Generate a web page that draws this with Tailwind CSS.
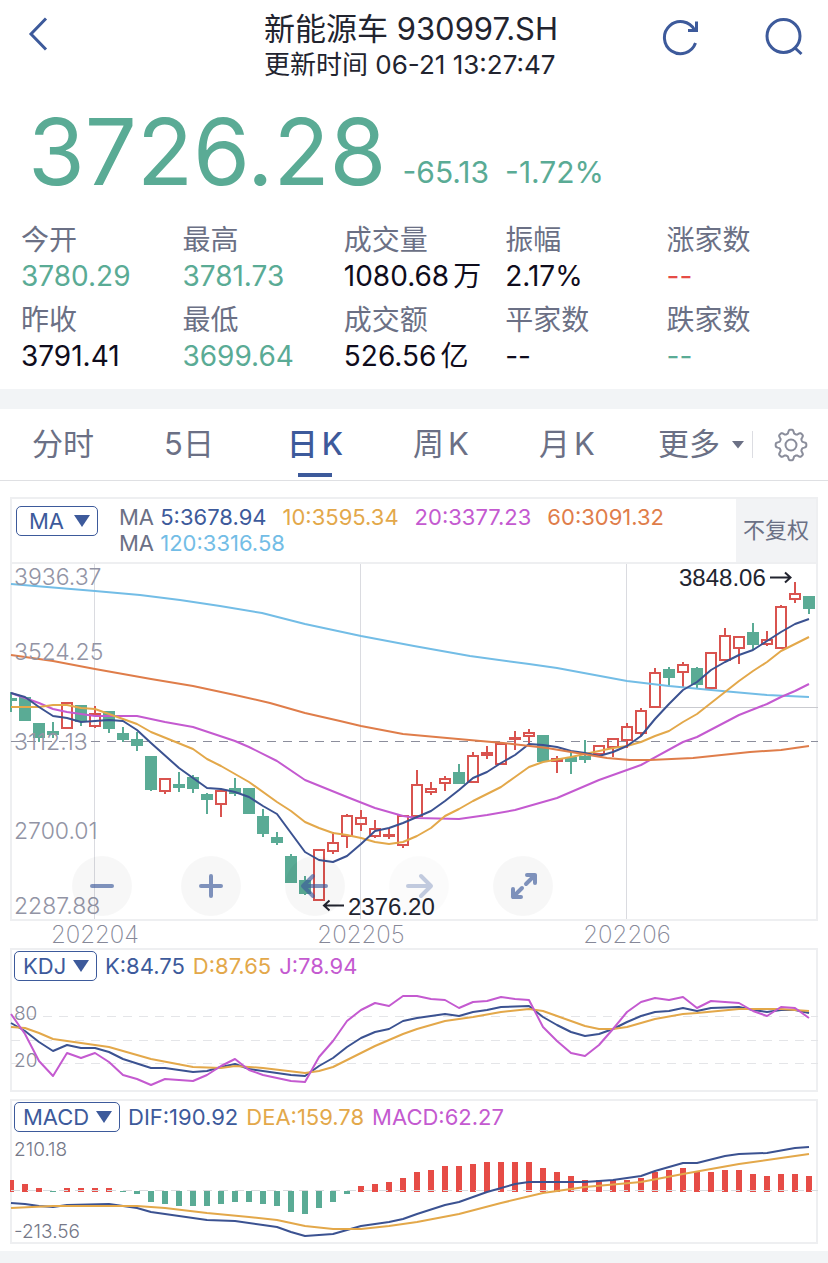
<!DOCTYPE html>
<html lang="zh-CN">
  <head>
    <meta charset="utf-8" />
    <meta name="viewport" content="width=device-width, initial-scale=1.0" />
    <title>新能源车 930997.SH</title>
    <script src="https://cdn.jsdelivr.net/npm/@tailwindcss/browser@4"></script>
  </head>
  <body class="bg-[#f2f4f6] font-['Inter','Noto_Sans_CJK_SC',sans-serif] text-[#6b7085]">
    <main class="bg-white pb-[7px]">
      <header class="flex h-[92px] justify-between px-6">
        <a href="#back" aria-label="返回" class="w-[138px] pt-4">
          <svg class="h-9 w-7" viewBox="0 0 28 36" fill="none" stroke="#3d5a9b" stroke-width="3">
            <path d="M22 2.500L7 18l15 15.500" />
          </svg>
        </a>
        <div class="whitespace-nowrap pt-[9px] text-[#22242f]">
          <h1 class="text-[31px] leading-[40px]">新能源车 930997.SH</h1>
          <p class="text-[26px] leading-[32px]">更新时间 06-21 13:27:47</p>
        </div>
        <div class="flex w-[144px] justify-between pt-4">
          <button type="button" aria-label="刷新" class="h-10 w-10">
            <svg class="size-10" viewBox="0 0 40 40" fill="none" stroke="#3d5a9b" stroke-width="3">
              <path d="M35.500 27A16 16 0 1 1 34.500 14" />
              <path d="M36.500 5.500V14.500H28" />
            </svg>
          </button>
          <button type="button" aria-label="搜索" class="h-10 w-10">
            <svg class="size-10" viewBox="0 0 40 40" fill="none" stroke="#3d5a9b" stroke-width="3">
              <circle cx="19.500" cy="20" r="16.500" />
              <path d="M30.500 31.500l7 6.500" />
            </svg>
          </button>
        </div>
      </header>

      <section class="flex items-end gap-4 pl-7 text-[#5aab95]">
        <strong class="text-[92px] font-normal leading-[120px]">3726.28</strong>
        <p class="flex gap-4 pb-[20px] text-[30px] leading-[40px]">
          <span>-65.13</span><span>-1.72%</span>
        </p>
      </section>

      <dl class="grid grid-cols-5 gap-y-2 pb-[15px] pl-[21px] pt-[10px] text-[28px] leading-9 text-[#0f0c1c]">
        <div><dt class="text-[#6b7085]">今开</dt><dd class="text-[#5aab95]">3780.29</dd></div>
        <div><dt class="text-[#6b7085]">最高</dt><dd class="text-[#5aab95]">3781.73</dd></div>
        <div><dt class="text-[#6b7085]">成交量</dt><dd class="flex gap-1 whitespace-nowrap"><span>1080.68</span><span>万</span></dd></div>
        <div><dt class="text-[#6b7085]">振幅</dt><dd>2.17%</dd></div>
        <div><dt class="text-[#6b7085]">涨家数</dt><dd class="text-[#e64c46]">--</dd></div>
        <div><dt class="text-[#6b7085]">昨收</dt><dd>3791.41</dd></div>
        <div><dt class="text-[#6b7085]">最低</dt><dd class="text-[#5aab95]">3699.64</dd></div>
        <div><dt class="text-[#6b7085]">成交额</dt><dd class="flex gap-1 whitespace-nowrap"><span>526.56</span><span>亿</span></dd></div>
        <div><dt class="text-[#6b7085]">平家数</dt><dd>--</dd></div>
        <div><dt class="text-[#6b7085]">跌家数</dt><dd class="text-[#5aab95]">--</dd></div>
      </dl>

      <nav class="flex h-[92px] items-stretch border-b border-t-[20px] border-b-[#dfe0e3] border-t-[#f2f4f6] text-[31px]">
        <button type="button" class="flex-1">分时</button>
        <button type="button" class="flex-1">5日</button>
        <button type="button" class="relative flex flex-1 items-center justify-center gap-1 font-medium text-[#3d5a9b]">
          <span>日</span><span>K</span>
          <span class="absolute bottom-[3px] left-1/2 h-1 w-[34px] -translate-x-1/2 bg-[#3d5a9b]"></span>
        </button>
        <button type="button" class="flex flex-1 items-center justify-center gap-1"><span>周</span><span>K</span></button>
        <button type="button" class="flex flex-1 items-center justify-center gap-1"><span>月</span><span>K</span></button>
        <button type="button" class="flex w-[122px] items-center justify-end gap-3 pr-2">
          更多
          <svg class="h-2 w-3" viewBox="0 0 12 8" fill="#6b7085"><path d="M0 0h12L6 7.500z" /></svg>
        </button>
        <button type="button" aria-label="设置" class="my-[22px] flex w-[76px] items-center justify-center border-l border-[#dcdde2]">
          <svg class="size-9 shrink-0" viewBox="0 0 36 36" fill="none" stroke="#8a8d9b" stroke-width="2">
            <circle cx="18" cy="18" r="5.500" />
            <path id="gear" stroke-linejoin="round" />
          </svg>
        </button>
      </nav>

      <div class="px-[10px] pt-4">
        <div class="flex h-[65px] border-2 border-b-0 border-[#eeeff1] pl-1">
          <div class="relative mt-[7px] h-[30px] w-[82px]">
            <select aria-label="主图指标" class="h-full w-full appearance-none rounded-[5px] border border-[#3d5a9b] pl-3 text-[22px] leading-7 text-[#3d5a9b]">
              <option>MA</option>
            </select>
            <svg class="pointer-events-none absolute right-2 top-[9px] h-3 w-4" viewBox="0 0 16 12" fill="#3d5a9b"><path d="M0 0h16L8 12z" /></svg>
          </div>
          <div class="flex flex-1 flex-wrap content-start gap-x-4 pl-[21px] pt-[5px] text-[22px] leading-[26px]">
            <span class="text-[#3d5a9b]"><span class="text-[#6b7085]">MA</span> 5:3678.94</span>
            <span class="text-[#e3a84a]">10:3595.34</span>
            <span class="text-[#c45ad0]">20:3377.23</span>
            <span class="text-[#df7d4a]">60:3091.32</span>
            <span class="text-[#73bde6]"><span class="text-[#6b7085]">MA</span> 120:3316.58</span>
          </div>
          <button type="button" class="w-20 shrink-0 bg-[#f2f3f5] text-[22px]">不复权</button>
        </div>

        <div class="relative">
          <svg id="kline" class="block h-auto w-full" viewBox="10 562 808 386" fill="none">
            <rect x="11" y="563" width="806" height="357" stroke="#eeeff1" stroke-width="2" />
            <path d="M94.500 564V919M360.500 564V919M626.500 564V919" stroke="#dadbe0" />
            <path d="M661 707.500H818" stroke="#c9cacf" />
            <path d="M11 741.500H818" stroke="#8c8e9c" stroke-dasharray="9 7" />
            <g id="candles"></g>
            <g id="ma" stroke-width="2" stroke-linejoin="round"></g>
            <g class="fill-[#9294a5] text-[23px] font-light">
              <text x="14" y="585">3936.37</text>
              <text x="14" y="660">3524.25</text>
              <text x="14" y="750">3112.13</text>
              <text x="14" y="839">2700.01</text>
              <text x="14" y="914">2287.88</text>
            </g>
            <g class="fill-[#868898] text-[24px] font-extralight" text-anchor="middle">
              <text x="95" y="943">202204</text>
              <text x="361" y="943">202205</text>
              <text x="627" y="943">202206</text>
            </g>
            <g class="fill-[#22242f] font-['Liberation_Sans'] text-[24px]">
              <text x="679" y="586">3848.06</text>
              <text x="348" y="915">2376.20</text>
            </g>
            <path d="M770 577.500h20M785 572.500l5.500 5-5.500 5M344 905.500h-20M329.500 900.500l-5.500 5 5.500 5" stroke="#22242f" stroke-width="2" />
          </svg>
          <button type="button" aria-label="缩小" class="absolute left-[62px] top-[294px] size-[60px] rounded-full bg-black/[0.03]">
            <svg class="size-[60px]" viewBox="0 0 60 60" fill="none" stroke="#3d5a9b" stroke-opacity=".65" stroke-width="4" stroke-linecap="round"><path d="M20 30h20" /></svg>
          </button>
          <button type="button" aria-label="放大" class="absolute left-[171px] top-[294px] size-[60px] rounded-full bg-black/[0.03]">
            <svg class="size-[60px]" viewBox="0 0 60 60" fill="none" stroke="#3d5a9b" stroke-opacity=".65" stroke-width="4" stroke-linecap="round"><path d="M20 30h20M30 20v20" /></svg>
          </button>
          <button type="button" aria-label="左移" class="absolute left-[275px] top-[294px] size-[60px] rounded-full bg-black/[0.03]">
            <svg class="size-[60px]" viewBox="0 0 60 60" fill="none" stroke="#3d5a9b" stroke-opacity=".65" stroke-width="4" stroke-linecap="round" stroke-linejoin="round"><path d="M41 30H19M28 20L18 30l10 10" /></svg>
          </button>
          <button type="button" aria-label="右移" class="absolute left-[379px] top-[294px] size-[60px] rounded-full bg-black/[0.015]">
            <svg class="size-[60px]" viewBox="0 0 60 60" fill="none" stroke="#3d5a9b" stroke-opacity=".3" stroke-width="4" stroke-linecap="round" stroke-linejoin="round"><path d="M19 30h22M32 20l10 10-10 10" /></svg>
          </button>
          <button type="button" aria-label="全屏" class="absolute left-[483px] top-[294px] size-[60px] rounded-full bg-black/[0.03]">
            <svg class="size-[60px]" viewBox="0 0 60 60" fill="none" stroke="#3d5a9b" stroke-opacity=".65" stroke-width="4" stroke-linecap="round" stroke-linejoin="round"><path d="M34 19h8v8M42 19l-9 9M29 32l-9 9M20 33v8h8" /></svg>
          </button>
        </div>

        <section class="ring-2 ring-inset ring-[#eeeff1]">
          <div class="flex h-9 items-center gap-2 pl-1 text-[22px] leading-[30px]">
            <div class="relative h-[30px] w-[83px]">
              <select aria-label="副图指标一" class="h-full w-full appearance-none rounded-[5px] border border-[#3d5a9b] pl-2 text-[22px] leading-7 text-[#3d5a9b]">
                <option>KDJ</option>
              </select>
              <svg class="pointer-events-none absolute right-2 top-[9px] h-3 w-4" viewBox="0 0 16 12" fill="#3d5a9b"><path d="M0 0h16L8 12z" /></svg>
            </div>
            <span class="text-[#3d5a9b]">K:84.75</span>
            <span class="text-[#e3a84a]">D:87.65</span>
            <span class="text-[#c45ad0]">J:78.94</span>
          </div>
          <svg class="block h-auto w-full" viewBox="10 984 808 108" fill="none">
            <path d="M11 1016.500H818M11 1040.500H818M11 1063.500H818" stroke="#e4e5e8" stroke-dasharray="9 7" />
            <g class="fill-[#868898] text-[19px] font-light">
              <text x="14" y="1020">80</text>
              <text x="14" y="1067">20</text>
            </g>
            <g id="kdj" stroke-width="2" stroke-linejoin="round"></g>
          </svg>
        </section>

        <section class="mt-[7px] ring-2 ring-inset ring-[#eeeff1]">
          <div class="flex h-9 items-center gap-2 pl-1 text-[22px] leading-[30px]">
            <div class="relative h-[30px] w-[106px]">
              <select aria-label="副图指标二" class="h-full w-full appearance-none rounded-[5px] border border-[#3d5a9b] pl-2 text-[22px] leading-7 text-[#3d5a9b]">
                <option>MACD</option>
              </select>
              <svg class="pointer-events-none absolute right-2 top-[9px] h-3 w-4" viewBox="0 0 16 12" fill="#3d5a9b"><path d="M0 0h16L8 12z" /></svg>
            </div>
            <span class="text-[#3d5a9b]">DIF:190.92</span>
            <span class="text-[#e3a84a]">DEA:159.78</span>
            <span class="text-[#c45ad0]">MACD:62.27</span>
          </div>
          <svg class="block h-auto w-full" viewBox="10 1135 808 109" fill="none">
            <g id="bars"></g>
            <path d="M11 1190.500H818" stroke="#d9dadd" stroke-dasharray="9 7" />
            <g class="fill-[#757888] text-[19px] font-light">
              <text x="14" y="1156">210.18</text>
              <text x="14" y="1238">-213.56</text>
            </g>
            <g id="macd" stroke-width="2" stroke-linejoin="round"></g>
          </svg>
        </section>
      </div>
    </main>

    <script>
      const NS = 'http://www.w3.org/2000/svg'
      const RED = '#d9534f'
      const GREEN = '#5aab95'
      const BLUE = '#3b5291'
      const YELLOW = '#e3a84a'
      const PURPLE = '#c45ad0'
      const STEP = 14

      function add(parent, name, attrs) {
        const el = document.createElementNS(NS, name)
        for (const key in attrs) el.setAttribute(key, attrs[key])
        document.querySelector(parent).append(el)
      }

      function line(parent, color, points) {
        add(parent, 'polyline', { points, stroke: color })
      }

      // direction, body top, body bottom, high, low
      const candles = [
        ['g', 698, 701, 692, 712], ['g', 697, 721, 697, 721], ['g', 723, 738, 723, 742], ['g', 731, 735, 722, 738],
        ['r', 702, 729, 702, 729], ['g', 705, 722, 705, 726], ['r', 713, 727, 706, 728], ['g', 711, 729, 711, 733],
        ['g', 733, 740, 727, 742], ['g', 739, 746, 732, 751], ['g', 756, 790, 756, 791], ['r', 778, 792, 778, 794],
        ['g', 784, 788, 772, 792], ['g', 777, 789, 775, 793], ['g', 794, 800, 793, 814], ['r', 790, 805, 789, 817],
        ['g', 788, 794, 778, 796], ['g', 788, 814, 788, 814], ['g', 816, 834, 809, 837], ['g', 837, 843, 832, 845],
        ['g', 856, 883, 854, 883], ['g', 880, 894, 876, 895], ['r', 849, 901, 849, 901], ['r', 842, 852, 832, 854],
        ['r', 815, 837, 814, 848], ['r', 817, 825, 810, 831], ['r', 828, 837, 820, 838], ['r', 834, 837, 828, 839],
        ['r', 815, 846, 815, 848], ['r', 784, 817, 770, 817], ['r', 788, 793, 782, 795], ['r', 778, 784, 776, 791],
        ['g', 772, 784, 764, 784], ['r', 755, 783, 752, 783], ['r', 752, 756, 746, 759], ['r', 743, 765, 743, 765],
        ['r', 737, 740, 731, 750], ['r', 732, 737, 729, 744], ['g', 735, 762, 735, 762], ['r', 758, 762, 756, 773],
        ['g', 757, 762, 752, 774], ['g', 756, 760, 740, 763], ['r', 745, 755, 745, 755], ['r', 738, 748, 738, 757],
        ['r', 726, 741, 723, 748], ['r', 710, 734, 708, 736], ['r', 672, 708, 668, 708], ['g', 669, 678, 667, 686],
        ['r', 664, 673, 662, 688], ['g', 668, 685, 667, 688], ['r', 652, 689, 652, 689], ['r', 635, 661, 628, 661],
        ['r', 636, 649, 636, 664], ['g', 632, 645, 623, 649], ['r', 639, 645, 631, 646], ['r', 606, 649, 605, 649],
        ['r', 593, 600, 582, 603], ['g', 596, 609, 596, 614]
      ]

      candles.forEach(([dir, top, bottom, high, low], i) => {
        const x = 11 + i * STEP
        const left = Math.max(x - 6, 10)
        const width = x + 6 - left
        if (dir === 'g') {
          add('#candles', 'path', { d: `M${x} ${high}V${low}`, stroke: GREEN, 'stroke-width': 2 })
          add('#candles', 'rect', { x: left, y: top, width, height: bottom - top, fill: GREEN })
          return
        }
        add('#candles', 'path', {
          d: `M${x} ${high}V${top}M${x} ${bottom}V${low}M${x - 5} ${top + 1}h10V${bottom - 1}h-10z`,
          stroke: RED,
          'stroke-width': 2
        })
      })

      // moving averages
      line('#ma', '#73bde6', '11,584 95,591 140,595 180,600 220,606 262,613 305,624 361,636 414,646 470,656 529,664 557,668 627,681 669,686 711,690 767,695 809,697')
      line('#ma', PURPLE, '11,693 25,698 39,703 53,709 67,712 81,714 95,716 137,716 165,722 193,727 235,741 249,747 277,761 305,780 347,797 375,808 403,816 417,818 459,819 487,815 515,810 557,798 599,780 613,775 641,765 683,742 697,737 739,715 767,704 781,697 795,691 809,684')
      line('#ma', YELLOW, '11,707 39,707 53,705 67,705 81,708 95,709 109,714 123,719 137,724 151,732 193,749 207,759 221,766 249,782 277,802 291,811 305,822 319,828 333,833 347,835 361,838 375,842 389,844 403,842 417,836 431,828 445,816 459,809 473,801 501,787 515,777 529,767 543,762 571,757 599,751 613,748 627,746 641,742 655,736 669,731 683,722 697,714 711,703 725,692 739,681 753,671 767,662 781,651 795,644 809,637')
      line('#ma', BLUE, '11,693 25,697 39,707 53,716 67,718 81,722 95,721 109,720 123,721 137,730 151,743 179,768 193,778 207,788 221,789 235,792 249,797 263,806 277,814 305,852 319,860 333,862 347,856 361,844 375,831 389,828 403,823 417,817 431,811 445,801 459,790 473,778 487,772 501,763 515,755 529,744 543,745 557,747 571,751 585,753 599,756 613,752 627,746 641,736 655,719 669,704 683,690 697,682 711,670 725,662 739,655 753,650 767,641 781,632 795,624 809,619')
      line('#ma', '#df7d4a', '11,655 53,661 95,669 151,679 193,686 235,695 270,703 305,713 340,721 361,726 403,734 447,738 503,743 547,748 583,754 607,758 630,760 650,760 693,758 750,752 781,750 809,746')

      line('#kdj', BLUE, '11,1023 25,1031 39,1042 53,1051 67,1045 81,1048 95,1048 109,1052 123,1059 151,1068 165,1068 193,1072 207,1071 221,1067 235,1064 249,1069 291,1075 305,1076 319,1066 333,1058 347,1047 361,1038 375,1032 389,1029 403,1021 417,1018 431,1016 445,1014 459,1016 473,1012 487,1010 501,1007 529,1006 543,1017 557,1025 571,1032 585,1036 599,1034 613,1029 627,1022 641,1016 655,1012 669,1011 683,1008 697,1011 711,1008 739,1007 753,1010 767,1012 781,1010 795,1010 809,1013')
      line('#kdj', YELLOW, '11,1027 25,1028 39,1033 53,1039 67,1041 81,1043 95,1045 109,1047 151,1059 193,1067 221,1068 235,1066 263,1068 305,1073 319,1071 333,1067 347,1060 361,1053 375,1046 389,1040 403,1034 417,1029 445,1021 473,1017 501,1012 529,1009 543,1011 557,1016 571,1021 585,1026 599,1029 613,1029 627,1027 655,1019 683,1014 697,1013 739,1009 781,1009 809,1011')
      line('#kdj', PURPLE, '11,1014 25,1034 39,1061 53,1076 67,1053 81,1058 95,1053 109,1062 123,1075 137,1079 151,1085 165,1079 193,1081 207,1075 221,1066 235,1059 249,1070 263,1075 291,1081 305,1082 319,1057 333,1041 347,1021 361,1010 375,1003 389,1006 403,996 417,996 431,999 445,1000 459,1008 473,1002 487,1001 501,997 515,999 529,1000 543,1027 557,1041 571,1053 585,1056 599,1045 613,1029 627,1012 641,1002 655,998 669,1000 683,997 697,1008 711,1001 725,1002 739,1003 753,1011 767,1016 781,1007 795,1008 809,1018')

      // end of each MACD bar, measured from the zero line at 1191
      const bars = [
        1180, 1184, 1188, 1192, 1188, 1188, 1188, 1188, 1192, 1194, 1202, 1204, 1206, 1206, 1206, 1204, 1202, 1202, 1204,
        1206, 1212, 1214, 1208, 1202, 1194, 1186, 1184, 1182, 1178, 1172, 1170, 1166, 1166, 1164, 1162, 1162, 1162, 1162,
        1168, 1172, 1176, 1180, 1180, 1180, 1180, 1178, 1172, 1170, 1168, 1172, 1172, 1170, 1170, 1174, 1176, 1174, 1174, 1176
      ]
      bars.forEach((y, i) => {
        const up = y < 1191
        add('#bars', 'rect', {
          x: 8 + i * STEP,
          y: up ? y : 1191,
          width: 6,
          height: up ? 1192 - y : y - 1191,
          fill: up ? '#e64c46' : GREEN
        })
      })

      line('#macd', BLUE, '11,1203 25,1204 39,1206 53,1207 67,1205 109,1204 123,1206 137,1208 151,1212 179,1216 207,1220 235,1221 263,1225 277,1227 291,1232 305,1236 333,1234 361,1226 389,1222 403,1219 417,1214 445,1205 459,1202 487,1192 515,1184 529,1182 585,1182 613,1180 641,1176 655,1171 683,1163 697,1163 725,1156 739,1154 767,1153 795,1148 809,1147')
      line('#macd', YELLOW, '11,1208 53,1206 95,1206 137,1206 165,1208 207,1213 249,1217 277,1220 305,1226 333,1229 361,1229 389,1226 417,1222 459,1214 501,1203 543,1193 585,1187 641,1182 683,1174 739,1164 781,1158 809,1154')

      // eight-toothed gear outline
      let gear = ''
      for (let i = 0; i < 96; i++) {
        const a = (i / 96) * Math.PI * 2
        const wave = Math.cos(a * 8)
        const r = 13.5 + 1.9 * Math.tanh(wave * 2.2)
        gear += `${i ? 'L' : 'M'}${(18 + r * Math.sin(a)).toFixed(2)} ${(18 - r * Math.cos(a)).toFixed(2)}`
      }
      document.querySelector('#gear').setAttribute('d', gear + 'z')
    </script>
  </body>
</html>
